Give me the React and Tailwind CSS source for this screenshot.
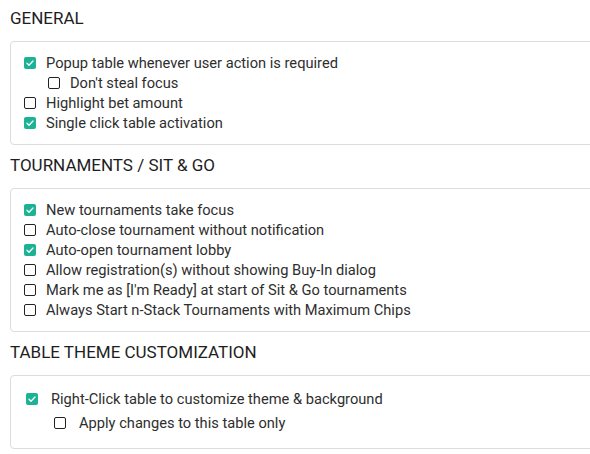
import React, { useState } from 'react';

const Checkbox = ({ checked, onClick }) => (
  <span
    onClick={onClick}
    className={
      checked
        ? 'flex h-3 w-3 shrink-0 items-center justify-center rounded-[2px] bg-[#1bb394]'
        : 'h-3 w-3 shrink-0 rounded-[2px] border-[1.5px] border-[#222]'
    }
  >
    {checked && (
      <svg viewBox="0 0 12 12" className="h-3 w-3" fill="none">
        <path d="M3 6.2l2 2 4-4.2" stroke="white" strokeWidth="1.3" strokeLinecap="round" strokeLinejoin="round" />
      </svg>
    )}
  </span>
);

const Option = ({ label, checked, onToggle, indent, gap, height }) => (
  <label className={`flex items-center cursor-pointer ${height} ${indent} ${gap}`}>
    <Checkbox checked={checked} onClick={onToggle} />
    <span className="whitespace-nowrap text-[14.67px] text-[#2e2e2e]">{label}</span>
  </label>
);

const sections = [
  {
    title: 'GENERAL',
    pad: 'pl-[13px] pt-[11px] pb-[11px]',
    height: 'h-5',
    gap: 'gap-[10px]',
    nested: 'pl-6',
    options: [
      { id: 'popup', label: 'Popup table whenever user action is required', checked: true },
      { id: 'focus', label: "Don't steal focus", checked: false, nested: true },
      { id: 'highlight', label: 'Highlight bet amount', checked: false },
      { id: 'single', label: 'Single click table activation', checked: true },
    ],
  },
  {
    title: 'TOURNAMENTS / SIT & GO',
    pad: 'pl-[13px] pt-[11px] pb-[11px]',
    height: 'h-5',
    gap: 'gap-[10px]',
    nested: 'pl-6',
    options: [
      { id: 'newfocus', label: 'New tournaments take focus', checked: true },
      { id: 'autoclose', label: 'Auto-close tournament without notification', checked: false },
      { id: 'autoopen', label: 'Auto-open tournament lobby', checked: true },
      { id: 'buyin', label: 'Allow registration(s) without showing Buy-In dialog', checked: false },
      { id: 'ready', label: "Mark me as [I'm Ready] at start of Sit & Go tournaments", checked: false },
      { id: 'nstack', label: 'Always Start n-Stack Tournaments with Maximum Chips', checked: false },
    ],
  },
  {
    title: 'TABLE THEME CUSTOMIZATION',
    pad: 'pl-[15px] pt-[11px] pb-[13px]',
    height: 'h-6',
    gap: 'gap-[13px]',
    nested: 'pl-[28px]',
    options: [
      { id: 'rightclick', label: 'Right-Click table to customize theme & background', checked: true },
      { id: 'thisonly', label: 'Apply changes to this table only', checked: false, nested: true },
    ],
  },
];

export default function App() {
  const initial = {};
  sections.forEach(s => s.options.forEach(o => { initial[o.id] = o.checked; }));
  const [values, setValues] = useState(initial);

  const toggle = (id) => {
    setValues(prev => ({ ...prev, [id]: !prev[id] }));
  };

  return (
    <div className="h-[454px] w-[590px] overflow-hidden bg-white pt-2 font-['Roboto',sans-serif]">
      <div className="w-[640px]">
        {sections.map((s, i) => (
          <div key={s.title} className={i === 0 ? '' : 'mt-[10px]'}>
            <h2 className="pl-[10px] text-[17px] leading-5 text-[#1e1e1e]">{s.title}</h2>
            <div className={`ml-[10px] mt-[13px] rounded-[4px] border border-[#dcdcdc] ${s.pad}`}>
              {s.options.map(o => (
                <Option
                  key={o.id}
                  label={o.label}
                  checked={values[o.id]}
                  onToggle={(e) => { e.preventDefault(); toggle(o.id); }}
                  indent={o.nested ? s.nested : ''}
                  gap={s.gap}
                  height={s.height}
                />
              ))}
            </div>
          </div>
        ))}
        <div className="ml-[2px] mt-[6px] border-t border-[#dcdcdc]" />
      </div>
    </div>
  );
}
